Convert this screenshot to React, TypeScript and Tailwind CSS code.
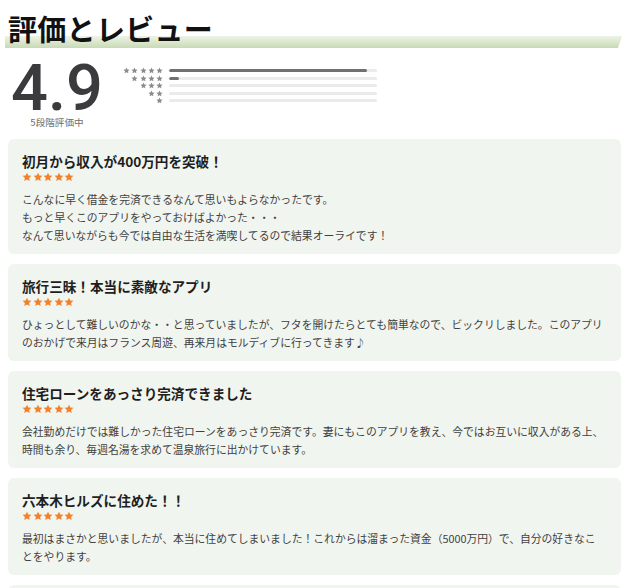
const reviews = [
  {
    title: "初月から収入が400万円を突破！",
    body: [
      "こんなに早く借金を完済できるなんて思いもよらなかったです。",
      "もっと早くこのアプリをやっておけばよかった・・・",
      "なんて思いながらも今では自由な生活を満喫してるので結果オーライです！",
    ],
  },
  {
    title: "旅行三昧！本当に素敵なアプリ",
    body: [
      "ひょっとして難しいのかな・・と思っていましたが、フタを開けたらとても簡単なので、ビックリしました。このアプリのおかげで来月はフランス周遊、再来月はモルディブに行ってきます♪",
    ],
  },
  {
    title: "住宅ローンをあっさり完済できました",
    body: [
      "会社勤めだけでは難しかった住宅ローンをあっさり完済です。妻にもこのアプリを教え、今ではお互いに収入がある上、時間も余り、毎週名湯を求めて温泉旅行に出かけています。",
    ],
  },
  {
    title: "六本木ヒルズに住めた！！",
    body: [
      "最初はまさかと思いましたが、本当に住めてしまいました！これからは溜まった資金（5000万円）で、自分の好きなこ",
      "とをやります。",
    ],
  },
];

const bars = [95, 5, 0, 0, 0];

const Star = ({ className }: { className: string }) => (
  <svg viewBox="0 0 24 24" className={className} fill="currentColor">
    <path d="M12 1.5l3.2 6.8 7.3.9-5.4 5.1 1.4 7.3L12 18l-6.5 3.6 1.4-7.3L1.5 9.2l7.3-.9L12 1.5z" />
  </svg>
);

const RatingSummary = () => (
  <div className="flex items-start mt-[15px]">
    <div className="ml-[1px] w-[96px] flex flex-col items-center">
      <div className="font-['Roboto',Arial,sans-serif] font-medium text-[65px] leading-[50px] text-[#3b3b3d]">
        4.9
      </div>
      <div className="mt-[2px] text-[9.6px] leading-[14px] text-[#707070]">
        5段階評価中
      </div>
    </div>
    <div className="ml-[17px] mt-[4px] flex flex-col">
      {bars.map((pct, i) => (
        <div key={i} className="flex items-center h-[7.5px]">
          <div className="w-[41px] flex justify-end gap-[1.2px] text-[#8c8c8c]">
            {Array.from({ length: 5 - i }).map((_, j) => (
              <Star key={j} className="w-[7px] h-[7px]" />
            ))}
          </div>
          <div className="ml-[6px] w-[208px] h-[3px] rounded-full bg-[#ebebeb] overflow-hidden">
            <div
              className="h-full rounded-full bg-[#707070]"
              style={{ width: `${pct}%` }}
            />
          </div>
        </div>
      ))}
    </div>
  </div>
);

export default function App() {
  return (
    <div className="bg-white px-2 pt-[14px] font-['Noto_Sans_CJK_JP','Noto_Sans',sans-serif]">
      <h2 className="relative z-10 text-[29px] leading-[29px] font-bold text-[#111] tracking-[0.3px]">
        評価とレビュー
      </h2>
      <div className="-mt-[7px] -ml-[3px] -mr-[1px] h-[12px] bg-[linear-gradient(to_bottom,#edf3e6,#c9dab5)] [clip-path:polygon(0_0,100%_0,calc(100%-4px)_100%,0_100%)]" />

      <RatingSummary />

      <div className="mt-[10px] flex flex-col gap-[10px]">
        {reviews.map((r) => (
          <div
            key={r.title}
            className="rounded-[6px] bg-[#f1f5ef] px-[14px] pt-[11px] pb-[10px]"
          >
            <h3 className="text-[13.6px] leading-[22px] font-bold text-[#1e1e1e]">
              {r.title}
            </h3>
            <div className="flex gap-[0.6px] text-[#f2812a] h-[10px] items-center">
              {Array.from({ length: 5 }).map((_, j) => (
                <Star key={j} className="w-[10px] h-[10px]" />
              ))}
            </div>
            <div className="mt-2 text-[10.8px] leading-[18px] text-[#3f3f3f]">
              {r.body.map((line) => (
                <p key={line}>{line}</p>
              ))}
            </div>
          </div>
        ))}
        <div className="rounded-t-[6px] bg-[#f1f5ef] h-[20px]" />
      </div>
    </div>
  );
}
